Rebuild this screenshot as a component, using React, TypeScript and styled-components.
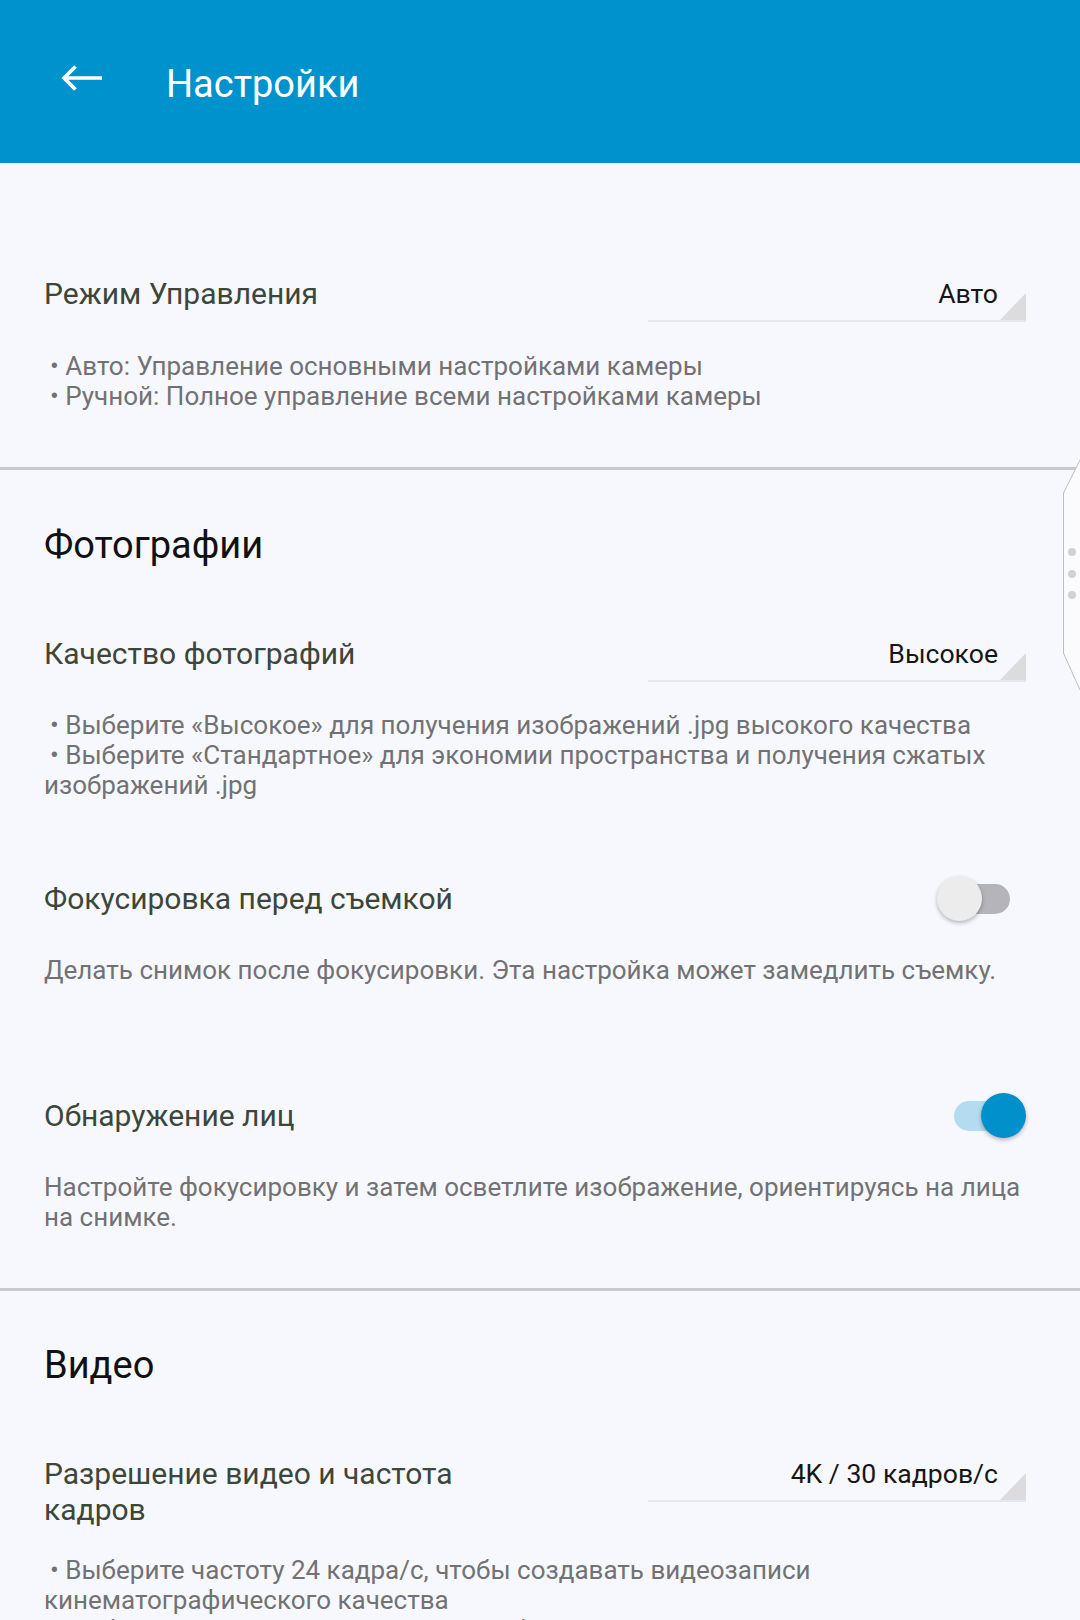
import React from "react";
import styled, { createGlobalStyle } from "styled-components";

const GlobalStyle = createGlobalStyle`
  html, body {
    margin: 0;
    padding: 0;
    background: #f7f8fd;
    overflow: hidden;
  }
  body {
    font-family: Roboto, "Noto Sans", "Liberation Sans", sans-serif;
  }
  * { box-sizing: border-box; }
`;

const Page = styled.div`
  position: relative;
  width: 1080px;
  height: 1620px;
  overflow: hidden;
  background: #f7f8fd;
`;

const TopBar = styled.header`
  height: 163px;
  background: #0092cd;
  display: flex;
  align-items: center;
  padding: 4px 0 0 61px;
`;

const BackButton = styled.div`
  display: flex;
  margin-bottom: 11px;
`;

const Title = styled.h1`
  margin: 0 0 0 63px;
  font-size: 38px;
  font-weight: 400;
  color: #ffffff;
  line-height: 48px;
`;

const Section = styled.section<{ $top: number; $last?: boolean }>`
  padding: ${(p) => p.$top}px 54px ${(p) => (p.$last ? 0 : 56)}px 44px;
  border-bottom: ${(p) => (p.$last ? "none" : "3px solid #c9c9cc")};
`;

const SectionTitle = styled.h2`
  margin: 0;
  font-size: 38px;
  line-height: 42px;
  font-weight: 400;
  color: #111111;
`;

const Item = styled.div<{ $top: number }>`
  margin-top: ${(p) => p.$top}px;
`;

const Row = styled.div<{ $center?: boolean }>`
  display: flex;
  justify-content: space-between;
  align-items: ${(p) => (p.$center ? "center" : "flex-start")};
`;

const Label = styled.div<{ $narrow?: boolean }>`
  font-size: 30px;
  line-height: 36px;
  color: #3c473a;
  max-width: ${(p) => (p.$narrow ? "460px" : "none")};
`;

const Dropdown = styled.div`
  position: relative;
  width: 378px;
  height: 46px;
  flex-shrink: 0;
  padding-right: 28px;
  border-bottom: 2px solid #e6e7ec;
  text-align: right;
  font-size: 26.6px;
  line-height: 36px;
  color: #161616;
`;

const Corner = styled.span`
  position: absolute;
  right: 0;
  bottom: 0;
  width: 26px;
  height: 27px;
  background: #dcdcde;
  clip-path: polygon(100% 0, 100% 100%, 0 100%);
`;

const Desc = styled.div<{ $gap: number }>`
  margin-top: ${(p) => p.$gap}px;
  font-size: 26px;
  line-height: 30px;
  color: #727274;
`;

const Bullet = styled.div`
  text-indent: 6px;
`;

const SwitchBox = styled.div`
  position: relative;
  width: 89px;
  height: 45px;
  flex-shrink: 0;
`;

const Track = styled.span<{ $on: boolean }>`
  position: absolute;
  left: 17px;
  top: 8px;
  width: 56px;
  height: 30px;
  border-radius: 15px;
  background: ${(p) => (p.$on ? "#b3dcf0" : "#b5b4b9")};
`;

const Thumb = styled.span<{ $on: boolean }>`
  position: absolute;
  top: 0;
  left: ${(p) => (p.$on ? 44 : 0)}px;
  width: 45px;
  height: 45px;
  border-radius: 50%;
  background: ${(p) => (p.$on ? "#0091cd" : "#ececec")};
  box-shadow: 0 2px 4px rgba(0, 0, 0, 0.28);
`;

const EdgeHandle = styled.div`
  position: absolute;
  right: 0;
  top: 460px;
  width: 17px;
  height: 230px;
`;

const Switch = ({ on }: { on: boolean }) => (
  <SwitchBox>
    <Track $on={on} />
    <Thumb $on={on} />
  </SwitchBox>
);

const Select = ({ value }: { value: string }) => (
  <Dropdown>
    {value}
    <Corner />
  </Dropdown>
);

export default function App() {
  return (
    <Page>
      <GlobalStyle />
      <TopBar>
        <BackButton>
          <svg width="42" height="28" viewBox="0 0 42 28">
            <path
              d="M41 14H3M14.5 2.5L3 14l11.5 11.5"
              fill="none"
              stroke="#ffffff"
              strokeWidth="3.6"
            />
          </svg>
        </BackButton>
        <Title>Настройки</Title>
      </TopBar>

      <Section $top={113}>
        <Row>
          <Label $narrow>Режим Управления</Label>
          <Select value="Авто" />
        </Row>
        <Desc $gap={29}>
          <Bullet>• Авто: Управление основными настройками камеры</Bullet>
          <Bullet>• Ручной: Полное управление всеми настройками камеры</Bullet>
        </Desc>
      </Section>

      <Section $top={54}>
        <SectionTitle>Фотографии</SectionTitle>
        <Item $top={70}>
          <Row>
            <Label $narrow>Качество фотографий</Label>
            <Select value="Высокое" />
          </Row>
          <Desc $gap={28}>
            <Bullet>• Выберите «Высокое» для получения изображений .jpg высокого качества</Bullet>
            <Bullet>
              • Выберите «Стандартное» для экономии пространства и получения сжатых изображений .jpg
            </Bullet>
          </Desc>
        </Item>
        <Item $top={76}>
          <Row $center>
            <Label>Фокусировка перед съемкой</Label>
            <Switch on={false} />
          </Row>
          <Desc $gap={34}>Делать снимок после фокусировки. Эта настройка может замедлить съемку.</Desc>
        </Item>
        <Item $top={108}>
          <Row $center>
            <Label>Обнаружение лиц</Label>
            <Switch on />
          </Row>
          <Desc $gap={34}>
            Настройте фокусировку и затем осветлите изображение, ориентируясь на лица на снимке.
          </Desc>
        </Item>
      </Section>

      <Section $top={53} $last>
        <SectionTitle>Видео</SectionTitle>
        <Item $top={70}>
          <Row>
            <Label $narrow>Разрешение видео и частота кадров</Label>
            <Select value="4K / 30 кадров/с" />
          </Row>
          <Desc $gap={27}>
            <Bullet>
              • Выберите частоту 24 кадра/с, чтобы создавать видеозаписи кинематографического качества
            </Bullet>
            <Bullet>• Выберите частоту 30 кадров/с для обычных видеозаписей</Bullet>
          </Desc>
        </Item>
      </Section>

      <EdgeHandle>
        <svg width="17" height="230" viewBox="0 0 17 230">
          <path d="M17 0L0.5 33V193L17 230" fill="#fbfbfe" stroke="#bdbdc0" strokeWidth="1" />
          <circle cx="9" cy="92" r="4" fill="#d2d2d5" />
          <circle cx="9" cy="114" r="4" fill="#d2d2d5" />
          <circle cx="9" cy="135" r="4" fill="#d2d2d5" />
        </svg>
      </EdgeHandle>
    </Page>
  );
}
